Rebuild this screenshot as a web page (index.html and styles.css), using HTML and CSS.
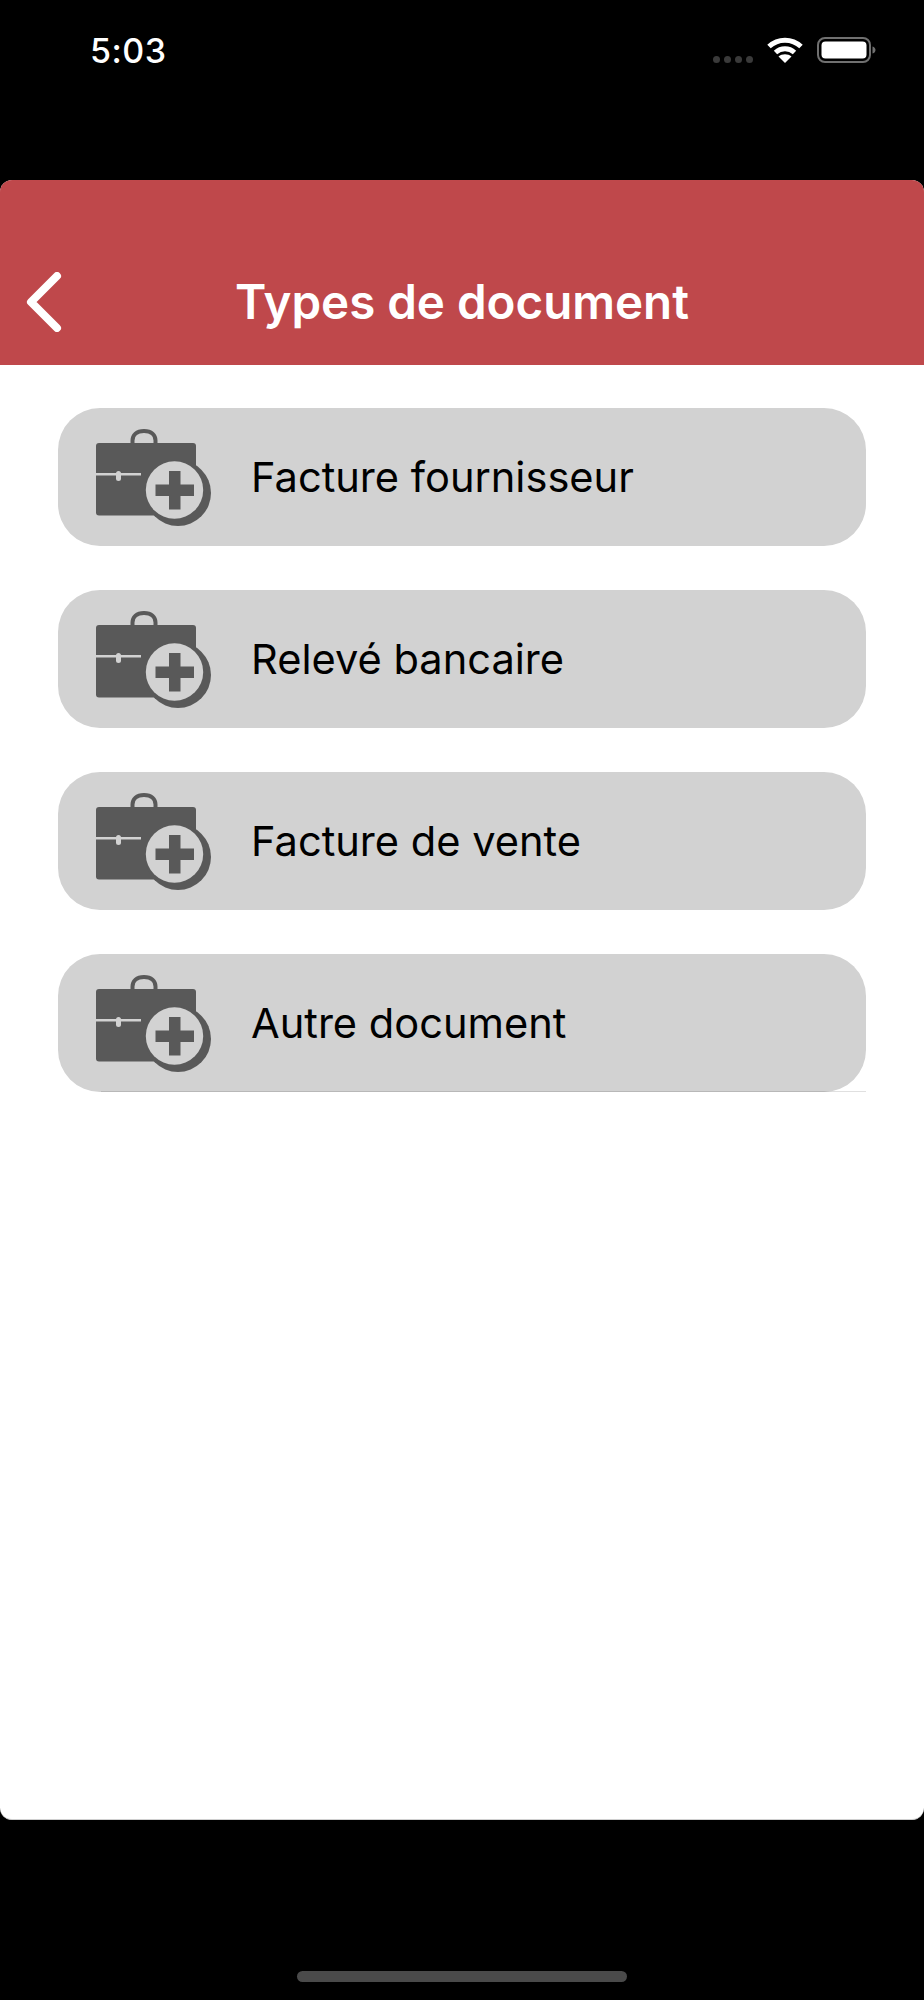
FILE: index.html
```html
<!DOCTYPE html>
<html lang="fr">
<head>
<meta charset="utf-8">
<title>Types de document</title>
<link rel="stylesheet" href="styles.css">
</head>
<body>
<div class="screen">
  <div class="status">
    <span class="time">5:03</span>
    <div class="status-icons">
      <div class="signal"><i></i><i></i><i></i><i></i></div>
      <svg class="wifi" width="36" height="26" viewBox="0 0 36 26">
        <path d="M2 9.500C11 1 25 1 34 9.500" fill="none" stroke="#fff" stroke-width="5"/>
        <path d="M8.500 15.500C14 10.500 22 10.500 27.500 15.500" fill="none" stroke="#fff" stroke-width="5"/>
        <path d="M18 26L11.500 19.500C15 16.500 21 16.500 24.500 19.500Z" fill="#fff"/>
      </svg>
      <svg class="battery" width="59" height="26" viewBox="0 0 59 26">
        <rect x="1" y="1" width="52" height="24" rx="7" fill="none" stroke="#707070" stroke-width="2"/>
        <rect x="4.500" y="4.500" width="45" height="17" rx="4" fill="#fff"/>
        <path d="M55.500 9.500C57.500 10 58.500 11.500 58.500 13C58.500 14.500 57.500 16 55.500 16.500Z" fill="#707070"/>
      </svg>
    </div>
  </div>
  <main class="sheet">
    <header class="nav">
      <svg class="back" width="40" height="60" viewBox="0 0 40 60">
        <path d="M35 4L9 30L35 56" fill="none" stroke="#fff" stroke-width="8" stroke-linecap="round" stroke-linejoin="round"/>
      </svg>
      <h1 class="title">Types de document</h1>
    </header>
    <div class="list">
      <a class="item">
        <svg class="doc-icon" viewBox="0 0 116 98"><use href="#case"/></svg>
        <span class="label">Facture fournisseur</span>
      </a>
      <a class="item">
        <svg class="doc-icon" viewBox="0 0 116 98"><use href="#case"/></svg>
        <span class="label">Relevé bancaire</span>
      </a>
      <a class="item">
        <svg class="doc-icon" viewBox="0 0 116 98"><use href="#case"/></svg>
        <span class="label">Facture de vente</span>
      </a>
      <a class="item item-last">
        <svg class="doc-icon" viewBox="0 0 116 98"><use href="#case"/></svg>
        <span class="label">Autre document</span>
      </a>
    </div>
  </main>
  <div class="home-area"><div class="home-bar"></div></div>
</div>
<svg class="defs" width="0" height="0">
  <defs>
    <g id="case">
      <path d="M36.500 15V11.500C36.500 6 40.500 2 48 2C55.500 2 59.500 6 59.500 11.500V15" fill="none" stroke="#595959" stroke-width="4"/>
      <rect x="0" y="14" width="100" height="72.500" rx="3" fill="#595959"/>
      <circle cx="82" cy="64" r="33" fill="#595959"/>
      <circle cx="78.500" cy="61" r="28.700" fill="#d2d2d2"/>
      <path d="M0 44h45v2.500H0z" fill="#d2d2d2"/>
      <rect x="20" y="42" width="5" height="10" rx="2.500" fill="#d2d2d2"/>
      <path d="M73 42h11.500v13.500h13.500v11.500h-13.500v13.500h-11.500v-13.500h-13.500v-11.500h13.500z" fill="#595959"/>
    </g>
  </defs>
</svg>
</body>
</html>
```
FILE: styles.css
```css
* { box-sizing: border-box; }
html, body { margin: 0; background: #000; }
body { font-family: Inter, "Liberation Sans", sans-serif; }
.screen { width: 924px; height: 2000px; display: flex; flex-direction: column; background: #000; }
.status { height: 180px; flex: none; display: flex; justify-content: space-between; align-items: flex-start; padding: 33px 48px 0 90px; }
.time { color: #fff; font-size: 34px; line-height: 36px; font-weight: 500; letter-spacing: 0.5px; font-family: Inter, sans-serif; }
.status-icons { display: flex; align-items: flex-start; padding-top: 4px; }
.signal { display: flex; gap: 4px; margin-top: 19px; margin-right: 14px; }
.signal i { width: 7px; height: 7px; border-radius: 50%; background: #3a3a3a; display: block; }
.wifi { margin-right: 14px; }
.sheet { height: 1640px; flex: none; background: #fff; border-radius: 12px; overflow: hidden; display: flex; flex-direction: column; border-bottom: 1px solid #cfcfcf; }
.nav { height: 185px; flex: none; background: #bf484b; display: flex; align-items: flex-end; position: relative; justify-content: center; padding-bottom: 33px; }
.back { position: absolute; left: 22px; top: 92px; }
.title { margin: 0; color: #fff; font-size: 47.500px; line-height: 60px; font-weight: 600; }
.list { display: flex; flex-direction: column; gap: 44px; padding: 43px 58px 0; }
.item { height: 138px; background: #d2d2d2; border-radius: 42px; display: flex; align-items: center; padding-left: 38px; color: #000; position: relative; }
.item-last::after { content: ""; position: absolute; left: 43px; right: 0; bottom: 0; height: 1px; background: rgba(0, 0, 0, 0.12); }
.doc-icon { width: 116px; height: 98px; flex: none; margin-top: 1px; margin-right: 39px; }
.label { font-size: 41.600px; font-weight: 400; }
.home-area { flex: 1; display: flex; justify-content: center; padding-top: 151px; }
.home-bar { width: 330px; height: 11px; border-radius: 6px; background: #4a4a4a; }
.defs { position: absolute; }
```
